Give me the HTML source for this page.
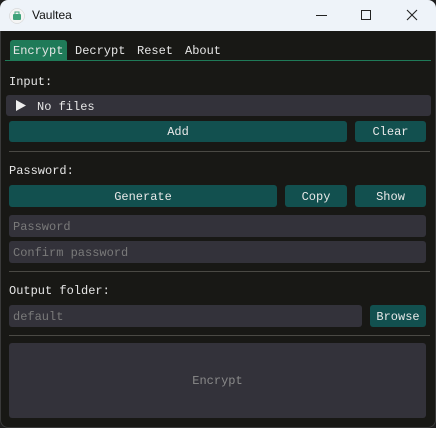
<!DOCTYPE html>
<html><head><style>
*{margin:0;padding:0;box-sizing:border-box}
body{width:436px;height:428px;background:#1f1f1f;overflow:hidden;font-family:"Liberation Mono",monospace;font-size:12px;color:#e6e6e6;position:relative}
.win{position:absolute;left:0;top:0;width:436px;height:428px;background:#181815;box-shadow:inset 0 0 0 1px #3a3a3a;border-radius:8px;overflow:hidden}
.title{position:absolute;left:0;top:0;width:436px;height:31px;background:#eef3f9;color:#111;font-family:"Liberation Sans",sans-serif;font-size:12px}
.a{position:absolute}
.btn{position:absolute;background:#12504f;border-radius:3px;text-align:center;color:#e8e8e8;line-height:22px;padding-top:1px}
.inp{position:absolute;background:#33323a;border-radius:3px;color:#7a7a7a;padding-left:4px;line-height:22px;padding-top:1px}
.sep{position:absolute;left:9px;width:421px;height:1px;background:#4a4944}
</style></head><body>
<div class="win">
<div class="title">
<svg class="a" style="left:9px;top:8px" width="16" height="16" viewBox="0 0 16 16"><circle cx="8" cy="8" r="7.5" fill="#f4f4f4" stroke="#ccc" stroke-width=".5"/><rect x="4" y="6" width="8" height="6" rx="1" fill="#3fa37a"/><path d="M6 6V4h4v2" stroke="#3fa37a" fill="none"/></svg>
<div class="a" style="left:32px;top:8px">Vaultea</div>
<div class="a" style="left:316px;top:15px;width:11px;height:1px;background:#222"></div>
<div class="a" style="left:361px;top:10px;width:10px;height:10px;border:1px solid #222"></div>
<svg class="a" style="left:406px;top:9px" width="12" height="12"><path d="M1 1L11 11M11 1L1 11" stroke="#222" stroke-width="1.1"/></svg>
</div>
<div class="a" style="left:10px;top:40px;width:57px;height:20px;background:#1f7a58;border-radius:3px 3px 0 0"></div>
<div class="a" style="left:13px;top:44px">Encrypt</div>
<div class="a" style="left:75px;top:44px">Decrypt</div>
<div class="a" style="left:137px;top:44px">Reset</div>
<div class="a" style="left:185px;top:44px">About</div>
<div class="a" style="left:5px;top:60px;width:426px;height:1px;background:#1f7a58"></div>
<div class="a" style="left:9px;top:75px">Input:</div>
<div class="inp" style="left:6px;top:95px;width:425px;height:21px"></div>
<svg class="a" style="left:16px;top:100px" width="10" height="11"><path d="M0 0L10 5.5L0 11Z" fill="#eee"/></svg>
<div class="a" style="left:37px;top:100px">No files</div>
<div class="btn" style="left:9px;top:121px;width:338px;height:21px;line-height:21px">Add</div>
<div class="btn" style="left:355px;top:121px;width:71px;height:21px;line-height:21px">Clear</div>
<div class="sep" style="top:151px"></div>
<div class="a" style="left:9px;top:164px">Password:</div>
<div class="btn" style="left:9px;top:185px;width:268px;height:22px">Generate</div>
<div class="btn" style="left:285px;top:185px;width:62px;height:22px">Copy</div>
<div class="btn" style="left:355px;top:185px;width:71px;height:22px">Show</div>
<div class="inp" style="left:9px;top:215px;width:417px;height:22px">Password</div>
<div class="inp" style="left:9px;top:241px;width:417px;height:22px">Confirm password</div>
<div class="sep" style="top:271px"></div>
<div class="a" style="left:9px;top:284px">Output folder:</div>
<div class="inp" style="left:9px;top:305px;width:353px;height:22px">default</div>
<div class="btn" style="left:370px;top:305px;width:56px;height:22px">Browse</div>
<div class="sep" style="top:335px"></div>
<div class="inp" style="left:9px;top:343px;width:417px;height:75px;line-height:75px;text-align:center;padding:1px 0 0;color:#8a8a8a">Encrypt</div>
</div>
</body></html>
